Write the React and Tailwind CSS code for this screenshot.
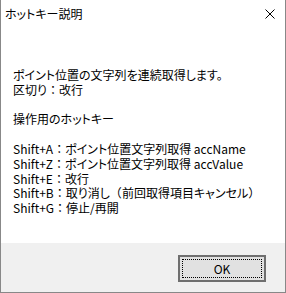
function F({ children }) {
  // full-width punctuation, keep its width
  return <span className="[font-feature-settings:normal]">{children}</span>
}

export default function App() {
  const font = "font-['Yu_Gothic_UI','Noto_Sans_CJK_JP',sans-serif] [font-feature-settings:'palt']"
  return (
    <div className={`w-[286px] h-[293px] flex flex-col bg-white border-x border-b border-[#888888] text-black ${font}`}>
      {/* title bar */}
      <div className="h-[27px] flex items-center justify-between pl-[4px] pr-[10px]">
        <span className="text-[12px] leading-none">ホットキー説明</span>
        <svg width="10" height="10" viewBox="0 0 10 10" className="mt-[1px]">
          <path d="M0.5 0.5 L9.5 9.5 M9.5 0.5 L0.5 9.5" stroke="#000" strokeWidth="1" />
        </svg>
      </div>

      {/* body */}
      <div className="flex-1 pt-[41px] pl-[12px] text-[12px] leading-[14.8px]">
        <p>ポイント位置の文字列を連続取得します。</p>
        <p>区切り<F>：</F>改行</p>
        <p>&nbsp;</p>
        <p>操作用のホットキー</p>
        <p>&nbsp;</p>
        <p>Shift+A<F>：</F>ポイント位置文字列取得 accName</p>
        <p>Shift+Z<F>：</F>ポイント位置文字列取得 accValue</p>
        <p>Shift+E<F>：</F>改行</p>
        <p>Shift+B<F>：</F>取り消し<F>（</F>前回取得項目キャンセル<F>）</F></p>
        <p>Shift+G<F>：</F>停止/再開</p>
      </div>

      {/* footer */}
      <div className="h-[49px] bg-[#f0f0f0] flex justify-end pt-[12px] pr-[19px]">
        <button className="w-[88px] h-[27px] border-2 border-[#6f6f6f] bg-[#e1e1e1] p-[2px]">
          <div className="w-full h-full border border-dotted border-black flex items-center justify-center text-[12px] leading-none">
            OK
          </div>
        </button>
      </div>
    </div>
  )
}
